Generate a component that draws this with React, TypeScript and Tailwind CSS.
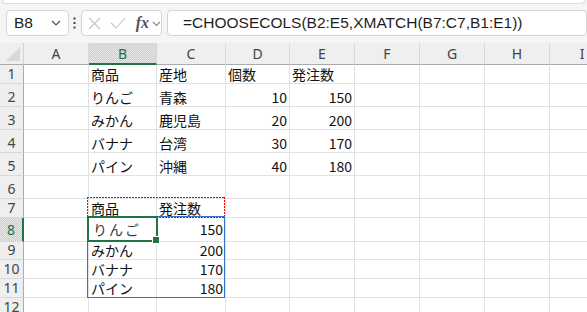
import React from "react";

const COLS = ["A", "B", "C", "D", "E", "F", "G", "H", "I"];

type Cell = { v: string; num?: boolean } | null;

const t = (v: string): Cell => ({ v });
const n = (v: string): Cell => ({ v, num: true });

// rows 1..12, columns A..I
const DATA: Cell[][] = [
  [null, t("商品"), t("産地"), t("個数"), t("発注数")],
  [null, t("りんご"), t("青森"), n("10"), n("150")],
  [null, t("みかん"), t("鹿児島"), n("20"), n("200")],
  [null, t("バナナ"), t("台湾"), n("30"), n("170")],
  [null, t("パイン"), t("沖縄"), n("40"), n("180")],
  [],
  [null, t("商品"), t("発注数")],
  [null, t("りんご"), n("150")],
  [null, t("みかん"), n("200")],
  [null, t("バナナ"), n("170")],
  [null, t("パイン"), n("180")],
  [],
];

const dither =
  "bg-[image:repeating-conic-gradient(#d0d0d0_0%_25%,#e4e4e4_0%_50%)] bg-[length:2px_2px]";

function FormulaBar() {
  return (
    <div className="h-[43px] bg-[#f5f5f5] overflow-hidden">
      <div className="mx-[2px] h-[4px] bg-white rounded-b-[6px] border-x border-b border-[#dcdcdc]" />
      <div className="flex items-center mt-[6px] h-[26px]">
        {/* name box */}
        <div className="ml-[6px] w-[102px] h-[26px] rounded-[4px] border border-[#d4d4d4] bg-white flex items-center justify-between pl-[7px] pr-[7px]">
          <span className="text-[15.5px] text-[#222] font-['Liberation_Sans',sans-serif]">B8</span>
          <svg width="10" height="6" viewBox="0 0 10 6">
            <path d="M1 1l4 4 4-4" fill="none" stroke="#555" strokeWidth="1.2" />
          </svg>
        </div>
        <div className="w-[21px] flex justify-center">
          <svg width="3" height="12" viewBox="0 0 3 12">
            <rect x="0.5" y="0.5" width="2" height="2" fill="#444" />
            <rect x="0.5" y="5" width="2" height="2" fill="#444" />
            <rect x="0.5" y="9.5" width="2" height="2" fill="#444" />
          </svg>
        </div>
        {/* cancel / enter / fx */}
        <div className="w-[85px] h-[26px] rounded-[4px] border border-[#d4d4d4] bg-white flex items-center pl-[6px]">
          <svg width="13" height="13" viewBox="0 0 13 13">
            <path d="M1 1l11 11M12 1L1 12" stroke="#c4c4c4" strokeWidth="1.1" />
          </svg>
          <svg width="16" height="12" viewBox="0 0 16 12" className="ml-[9px]">
            <path d="M1 6l5 5L15 1" fill="none" stroke="#c4c4c4" strokeWidth="1.1" />
          </svg>
          <span className="ml-[10px] text-[16px] italic font-bold text-[#555] font-['Liberation_Serif',serif] leading-none">
            fx
          </span>
          <svg width="9" height="6" viewBox="0 0 9 6" className="ml-[3px] mt-[2px]">
            <path d="M1 1l3.5 3.5L8 1" fill="none" stroke="#888" strokeWidth="1.1" />
          </svg>
        </div>
        {/* formula */}
        <div className="ml-[5px] w-[420px] shrink-0 h-[26px] rounded-[4px] border border-[#d4d4d4] bg-white flex items-center pl-[15px]">
          <span className="text-[15.5px] text-[#1f1f1f] font-['Liberation_Sans',sans-serif] whitespace-nowrap">
            =CHOOSECOLS(B2:E5,XMATCH(B7:C7,B1:E1))
          </span>
        </div>
      </div>
    </div>
  );
}

const dotH = "bg-[image:repeating-linear-gradient(90deg,#ff0000_0_2px,transparent_2px_3px)]";
const dotV = "bg-[image:repeating-linear-gradient(180deg,#ff0000_0_2px,transparent_2px_3px)]";

function Sheet() {
  const cells: React.ReactNode[] = [];

  // header row
  cells.push(
    <div key="corner" className="bg-[#efefef] border-r border-b border-r-[#d4d4d4] border-b-[#ababab] flex items-end justify-end pr-[3px] pb-[3px]">
      <svg width="14" height="14" viewBox="0 0 14 14">
        <path d="M14 0L14 14L0 14Z" fill="#d9d9d9" />
      </svg>
    </div>
  );
  COLS.forEach((c) => {
    const sel = c === "B";
    cells.push(
      <div
        key={"h" + c}
        className={
          sel
            ? `${dither} border-r border-r-[#d4d4d4] border-b-2 border-b-[#217346] text-[#217346] flex items-center justify-center text-[14px] pt-[1px]`
            : "bg-[#efefef] border-r border-r-[#d9d9d9] border-b border-b-[#ababab] text-[#444] flex items-center justify-center text-[14px]"
        }
      >
        {c}
      </div>
    );
  });

  DATA.forEach((row, ri) => {
    const r = ri + 1;
    const sel = r === 8;
    cells.push(
      <div
        key={"r" + r}
        className={
          sel
            ? `${dither} border-r-2 border-r-[#217346] border-b border-b-[#d9d9d9] text-[#217346] flex items-end justify-center text-[14px] leading-[18px] pb-[2px]`
            : "bg-[#efefef] border-r border-r-[#ababab] border-b border-b-[#d9d9d9] text-[#444] flex items-end justify-center text-[14px] leading-[18px]"
        }
      >
        {r}
      </div>
    );
    COLS.forEach((c, ci) => {
      const cell = row[ci] ?? null;
      const active = r === 8 && c === "B";
      cells.push(
        <div
          key={c + r}
          className={`bg-white border-r border-b border-[#e1e1e1] flex items-end overflow-visible whitespace-nowrap text-[14px] leading-[18px] font-['Noto_Sans_CJK_JP',sans-serif] ${
            cell?.num ? "justify-end pr-[2px]" : "justify-start pl-[2px]"
          } ${sel ? "pb-[3px]" : ""} ${active ? "text-[#3a3a3a] tracking-[2px] pl-[4px]" : "text-[#111]"}`}
        >
          {cell ? cell.v : null}
        </div>
      );
    });
  });

  return (
    <div className="relative">
      <div className="grid grid-cols-[24px_65px_68px_69px_64px_65px_65px_65px_65px_65px] grid-rows-[22px_19px_23px_23px_23px_23px_23px_19px_24px_18px_19px_19px_19px] font-['Noto_Sans',sans-serif]">
        {cells}
      </div>
      {/* B7:C7 reference (dotted red) */}
      <div className="absolute left-[87px] top-[154px] w-[138px] h-[21px]">
        <div className={`absolute left-0 top-0 w-full h-[1px] ${dotH}`} />
        <div className={`absolute left-0 bottom-0 w-full h-[1px] ${dotH}`} />
        <div className={`absolute left-0 top-0 h-full w-[1px] ${dotV}`} />
        <div className={`absolute right-0 top-0 h-full w-[1px] ${dotV}`} />
      </div>
      {/* spill range B8:C11 */}
      <div className="absolute left-[87px] top-[173px] w-[138px] h-[82px] border border-[#3a6fd0]" />
      {/* active cell B8 */}
      <div className="absolute left-[87px] top-[173px] w-[71px] h-[26px] border-2 border-[#217346]" />
      <div className="absolute left-[153px] top-[194px] w-[6px] h-[6px] bg-[#217346] outline outline-1 outline-white" />
    </div>
  );
}

export default function App() {
  return (
    <div className="w-[587px] h-[312px] overflow-hidden bg-white">
      <FormulaBar />
      <Sheet />
    </div>
  );
}
